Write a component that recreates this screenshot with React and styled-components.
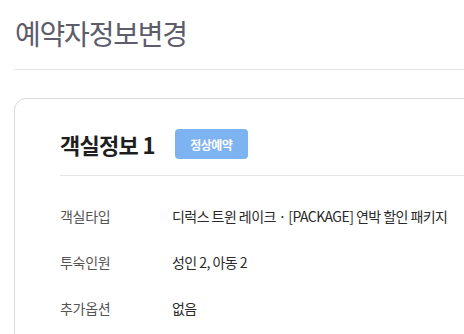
import React from "react";
import styled, { createGlobalStyle } from "styled-components";

const GlobalStyle = createGlobalStyle`
  html, body {
    margin: 0;
    padding: 0;
    background: #fff;
    overflow: hidden;
  }
  body {
    font-family: "Noto Sans CJK KR", "Noto Sans", sans-serif;
  }
`;

const rows = [
  { label: "객실타입", value: "디럭스 트윈 레이크 · [PACKAGE] 연박 할인 패키지" },
  { label: "투숙인원", value: "성인 2, 아동 2" },
  { label: "추가옵션", value: "없음" },
];

const App = () => {
  return (
    <Page>
      <GlobalStyle />
      <PageTitle>예약자정보변경</PageTitle>
      <Card>
        <CardHead>
          <CardTitle>객실정보 1</CardTitle>
          <Badge>정상예약</Badge>
        </CardHead>
        <InfoList>
          {rows.map((r) => (
            <InfoRow key={r.label}>
              <Label>{r.label}</Label>
              <Value>{r.value}</Value>
            </InfoRow>
          ))}
        </InfoList>
      </Card>
    </Page>
  );
};

export default App;

const Page = styled.div`
  width: 540px;
  padding-left: 14px;
`;

const PageTitle = styled.h1`
  margin: 0;
  padding: 15px 0 18px 1px;
  font-size: 28px;
  line-height: 36px;
  font-weight: 400;
  letter-spacing: -1.2px;
  color: #5c5c6a;
  border-bottom: 1px solid #e2e2e2;
`;

const Card = styled.div`
  margin-top: 28px;
  border: 1px solid #dcdcdc;
  border-radius: 12px;
  padding: 0 0 20px 45px;
`;

const CardHead = styled.div`
  display: flex;
  align-items: center;
  gap: 20px;
  padding: 30px 0 16px;
  border-bottom: 1px solid #e4e4e4;
`;

const CardTitle = styled.h2`
  margin: 0;
  font-size: 22px;
  line-height: 30px;
  font-weight: 700;
  letter-spacing: -0.7px;
  color: #1e1e1e;
`;

const Badge = styled.span`
  display: inline-flex;
  align-items: center;
  justify-content: center;
  width: 73px;
  height: 30px;
  border-radius: 4px;
  background: #7eb3f1;
  color: #fff;
  font-size: 12px;
  font-weight: 700;
  letter-spacing: -0.5px;
`;

const InfoList = styled.div`
  padding-top: 17px;
`;

const InfoRow = styled.div`
  display: flex;
  align-items: center;
  height: 46px;
`;

const Label = styled.span`
  width: 112px;
  font-size: 14px;
  letter-spacing: -0.3px;
  color: #555;
`;

const Value = styled.span`
  font-size: 14px;
  letter-spacing: -0.55px;
  color: #2a2a2a;
`;
